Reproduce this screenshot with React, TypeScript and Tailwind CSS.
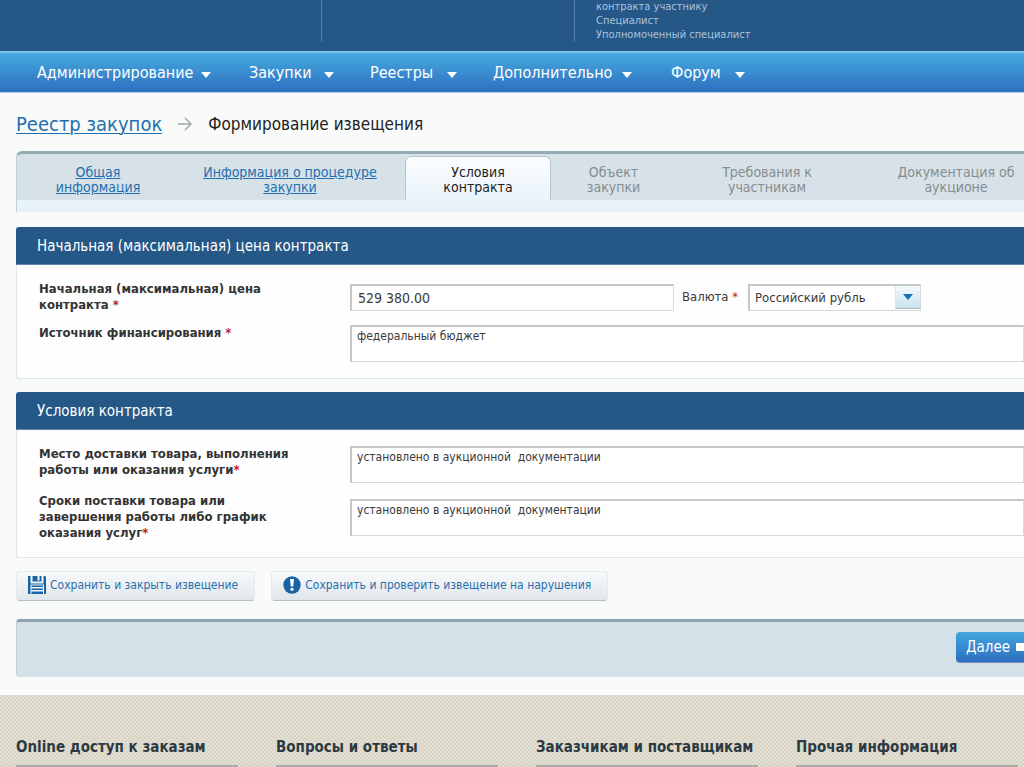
import clsx from "clsx";

const menu = [
  { label: "Администрирование", size: "w-[212px]", gap: "gap-2" },
  { label: "Закупки", size: "w-[121px]", gap: "gap-3" },
  { label: "Реестры", size: "w-[123px]", gap: "gap-3.5" },
  { label: "Дополнительно", size: "w-[178px]", gap: "gap-2.5" },
  { label: "Форум", size: "w-[100px]", gap: "gap-3.5" },
];

const tabs = [
  { lines: ["Общая", "информация"], state: "done", size: "w-[162px]" },
  { lines: ["Информация о процедуре", "закупки"], state: "done", size: "w-[226px] pr-1" },
  { lines: ["Условия", "контракта"], state: "active", size: "w-[146px]" },
  { lines: ["Объект", "закупки"], state: "disabled", size: "w-[125px]" },
  { lines: ["Требования к", "участникам"], state: "disabled", size: "w-[182px]" },
  { lines: ["Документация об", "аукционе"], state: "disabled", size: "min-w-[166px] flex-1 pl-[30px]" },
];

const footerLinks = [
  "Online доступ к заказам",
  "Вопросы и ответы",
  "Заказчикам и поставщикам",
  "Прочая информация",
];

const fieldBorder =
  "border border-t-2 border-l-2 border-[#d3d9dc] border-t-[#c3c8cb] border-l-[#c3c8cb] bg-white text-[#3a3a3a] outline-none";

function Caret({ className }: { className?: string }) {
  return (
    <svg viewBox="0 0 10 6" className={clsx("h-1.5 w-2.5 shrink-0 fill-current", className)}>
      <path d="M0 0h10L5 6z" />
    </svg>
  );
}

function Required() {
  return <span className="text-[#c0202a]">*</span>;
}

function TopBar() {
  return (
    <header className="flex h-[51px] bg-[#255887] text-[11px] leading-[14px] text-[#a9c3dc]">
      <div className="h-[42px] w-[322px] shrink-0 border-r border-[#5580a8]" />
      <div className="h-[42px] w-[253px] shrink-0 border-r border-[#5580a8]" />
      <div className="pl-[21px]">
        <p>контракта участнику</p>
        <p>Специалист</p>
        <p>Уполномоченный специалист</p>
      </div>
    </header>
  );
}

function MainMenu() {
  return (
    <nav className="flex h-[42px] items-center border-t-2 border-b border-t-[#7cc0ea] border-b-[#a9cff0] bg-linear-to-b from-[#45a9de] to-[#2f70c0] pl-[37px] text-base text-white">
      {menu.map((item) => (
        <div key={item.label} className={item.size}>
          <button type="button" className={clsx("flex items-center whitespace-nowrap", item.gap)}>
            {item.label}
            <Caret className="mt-1" />
          </button>
        </div>
      ))}
    </nav>
  );
}

function Steps() {
  return (
    <div className="overflow-hidden rounded-tl-md border-t-[3px] border-l border-t-[#94abb4] border-l-[#c3d3da] bg-[#d6e1e8]">
      <div className="flex h-[46px] text-center text-sm leading-[15px]">
        {tabs.map((tab) => (
          <div
            key={tab.lines[0]}
            className={clsx(
              "shrink-0 whitespace-nowrap",
              tab.size,
              tab.state === "active"
                ? "mt-0.5 rounded-t-md border border-b-0 border-[#b3c4cc] bg-linear-to-b from-[#fbfdfe] to-[#eaf4fb] pt-2 text-[#1c1c1c]"
                : "pt-[11px]",
              tab.state === "disabled" && "text-[#868c90]",
            )}
          >
            {tab.state === "done" ? (
              <a href="#" className="text-[#1f6fae] underline">
                {tab.lines[0]}
                <br />
                {tab.lines[1]}
              </a>
            ) : (
              <span>
                {tab.lines[0]}
                <br />
                {tab.lines[1]}
              </span>
            )}
          </div>
        ))}
      </div>
      <div className="h-3 bg-[#e7f2fa]" />
    </div>
  );
}

function Panel({ title, children }: { title: string; children: React.ReactNode }) {
  return (
    <section>
      <h2 className="flex h-[38px] items-center rounded-tl-[3px] border-b border-[#5f87ad] bg-[#255887] pt-0.5 pl-[21px] text-[15px] text-white">
        {title}
      </h2>
      <div className="rounded-bl-[3px] border-b border-l border-[#dce6ec] bg-[#fefefe] pt-4 pb-4 pl-[22px]">
        {children}
      </div>
    </section>
  );
}

function FieldLabel({ htmlFor, lines, spaced }: { htmlFor: string; lines: string[]; spaced?: boolean }) {
  return (
    <label htmlFor={htmlFor} className="w-[311px] shrink-0 text-[13px] leading-4 font-bold text-[#333]">
      {lines.map((line, i) => (
        <span key={line} className={clsx("flex", spaced && "gap-1")}>
          <span>{line}</span>
          {i === lines.length - 1 && <Required />}
        </span>
      ))}
    </label>
  );
}

function SaveIcon() {
  return (
    <svg viewBox="0 0 18 18" className="h-[18px] w-[18px] shrink-0">
      <path fill="#1763a6" d="M0 0h2.500v7.500h13V0H17l1 1v17H0z" />
      <path fill="#1763a6" d="M4.500 0h9v5.500h-9z" />
      <path fill="#f3f7fa" d="M9.500 0h2v4.500h-2zM2.500 8.500H18V18H2.500z" />
      <path fill="#1763a6" d="M3.500 9.500H15V11H3.500zM3.500 12.500H15V14H3.500zM3.500 15.500H15V18H3.500zM16 7h2v11h-2z" />
    </svg>
  );
}

function AlertIcon() {
  return (
    <svg viewBox="0 0 18 18" className="h-[18px] w-[18px] shrink-0">
      <circle cx="9" cy="9" r="8.700" fill="#1763a6" />
      <path fill="#fff" d="M7 3h4l-.8 7.500H7.800z" />
      <circle cx="9" cy="13.300" r="1.600" fill="#fff" />
    </svg>
  );
}

const actionButton =
  "flex h-[30px] items-center gap-1 whitespace-nowrap rounded border border-[#e4eaee] border-b-[#b5bfc6] bg-linear-to-b from-[#f8fafb] to-[#dfe6eb] pr-4 pb-0.5 pl-[11px] text-xs text-[#2a6fae]";

const textArea = "h-[37px] flex-1 resize-none px-[5px] pt-px text-xs leading-4";

export default function App() {
  return (
    <div className="overflow-x-hidden bg-[#f9fafa] font-['DejaVu_Sans_Condensed','Noto_Sans',sans-serif]">
      <TopBar />
      <MainMenu />

      <main className="pl-4">
        <div className="flex h-[58px] items-center gap-4 pt-1">
          <a href="#" className="text-xl leading-6 text-[#1f6fae] underline decoration-1 underline-offset-2">
            Реестр закупок
          </a>
          <svg viewBox="0 0 14 14" className="h-3.5 w-3.5 fill-none stroke-[#a3a8ab] stroke-[1.5]">
            <path d="M0 7h13M7 1l6 6-6 6" />
          </svg>
          <h1 className="pt-0.5 text-[17px] text-[#222]">Формирование извещения</h1>
        </div>

        <Steps />

        <form className="pt-[15px]">
          <Panel title="Начальная (максимальная) цена контракта">
            <div className="flex">
              <FieldLabel htmlFor="price" lines={["Начальная (максимальная) цена", "контракта"]} spaced />
              <div className="flex items-center">
                <input
                  id="price"
                  defaultValue="529 380.00"
                  className={clsx("h-[27px] w-[324px] px-1.5 text-sm", fieldBorder)}
                />
                <label htmlFor="currency" className="w-[74px] pl-2 text-[13px] text-[#3a3a3a]">
                  Валюта <Required />
                </label>
                <div className="relative">
                  <select
                    id="currency"
                    className={clsx("block h-[27px] w-[173px] appearance-none px-[5px] text-[13px]", fieldBorder)}
                  >
                    <option>Российский рубль</option>
                  </select>
                  <span className="pointer-events-none absolute inset-y-0.5 right-px flex w-[25px] items-center justify-center border-b border-l border-[#a9b8c0] border-l-[#dfe7eb] bg-linear-to-b from-[#f4f9fb] to-[#cbe3ef] text-[#0f71ae]">
                    <Caret />
                  </span>
                </div>
              </div>
            </div>
            <div className="mt-3 flex">
              <FieldLabel htmlFor="source" lines={["Источник финансирования"]} spaced />
              <textarea id="source" defaultValue="федеральный бюджет" className={clsx(textArea, fieldBorder)} />
            </div>
          </Panel>

          <div className="pt-[13px]">
            <Panel title="Условия контракта">
              <div className="flex">
                <FieldLabel
                  htmlFor="place"
                  lines={["Место доставки товара, выполнения", "работы или оказания услуги"]}
                />
                <textarea
                  id="place"
                  defaultValue="установлено в аукционной  документации"
                  className={clsx(textArea, fieldBorder)}
                />
              </div>
              <div className="mt-2.5 flex">
                <FieldLabel
                  htmlFor="terms"
                  lines={["Сроки поставки товара или", "завершения работы либо график", "оказания услуг"]}
                />
                <textarea
                  id="terms"
                  defaultValue="установлено в аукционной  документации"
                  className={clsx("mt-1.5", textArea, fieldBorder)}
                />
              </div>
            </Panel>
          </div>

          <div className="flex gap-4 pt-[13px] pb-[15px]">
            <button type="button" className={actionButton}>
              <SaveIcon />
              Сохранить и закрыть извещение
            </button>
            <button type="button" className={actionButton}>
              <AlertIcon />
              Сохранить и проверить извещение на нарушения
            </button>
          </div>

          <div className="mt-[3px] flex h-[58px] justify-end rounded-l border-t-[3px] border-l border-t-[#8fa3af] border-l-[#bccdd6] bg-[#d5e1e9] pt-2.5">
            <button
              type="submit"
              className="flex h-[31px] items-center gap-1.5 rounded-l border-b border-[#7393bd] bg-linear-to-b from-[#43a5dc] to-[#2f6fc0] pl-2.5 text-[15px] text-white"
            >
              Далее
              <span className="h-2 w-2 bg-white" />
            </button>
          </div>
        </form>
      </main>

      <footer className="mt-[18px] bg-[conic-gradient(#d9d5c6_25%,#e3dfd2_0_50%,#d9d5c6_0_75%,#e3dfd2_0)] bg-size-[4px_4px] pt-10 pl-4">
        <div className="flex gap-[38px]">
          {footerLinks.map((title) => (
            <h3
              key={title}
              className="w-[222px] shrink-0 border-b-2 border-[#aaaba6] pb-1.5 text-[15px] leading-6 font-bold whitespace-nowrap text-[#2c3a44]"
            >
              {title}
            </h3>
          ))}
        </div>
      </footer>
    </div>
  );
}
